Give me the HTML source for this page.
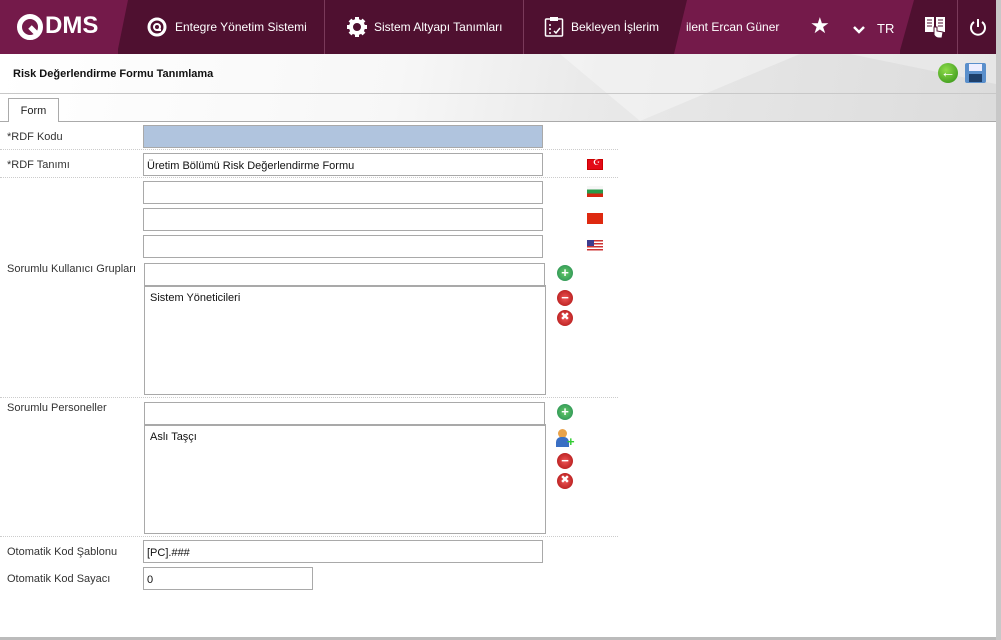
<!DOCTYPE html>
<html><head><meta charset="utf-8"><style>
*{box-sizing:border-box;margin:0;padding:0}
body{width:1001px;height:640px;overflow:hidden;background:#fff;font-family:"Liberation Sans","DejaVu Sans",sans-serif;position:relative}
.hdr{position:absolute;left:0;top:0;width:996px;height:54px;background:#4f1030;overflow:hidden}
.abs{position:absolute}
.ht{position:absolute;color:#fff;font-size:12px;top:20px;white-space:nowrap}
.sep{position:absolute;top:0;width:1px;height:54px;background:#7a3a5a}
.lbl{position:absolute;left:7px;font-size:11px;color:#333}
.in{position:absolute;border:1px solid #a9a9a9;background:#fff;height:23px;font-size:11px;color:#111;padding:6px 0 0 3px;white-space:nowrap}
.ta{position:absolute;border:1px solid #a9a9a9;border-top:2px solid #a9a9a9;background:#fff;font-size:11px;color:#111;padding:5px 0 0 5px}
.dot{position:absolute;left:0;width:618px;border-top:1px dotted #ccc}
.flag{position:absolute;left:587px;width:16px;height:11px}
.circ{position:absolute;left:557px;width:16px;height:16px;border-radius:50%;color:#fff;font-weight:bold;font-size:13px;line-height:15px;text-align:center}
</style></head><body>
<div class="hdr">
 <div class="abs" style="top:0;width:0;height:0;border-top:54px solid #741a4a;border-right:11px solid transparent;left:117px"></div>
 <div class="abs" style="left:0;top:0;width:118px;height:54px;background:#741a4a"></div>
 <svg class="abs" style="left:16px;top:13px" width="30" height="30" viewBox="0 0 30 30"><circle cx="14" cy="14" r="10.5" fill="none" stroke="#fff" stroke-width="5"/><path d="M14 14 L22 22" stroke="#fff" stroke-width="5"/></svg>
 <div class="abs" style="left:45px;top:12px;color:#fff;font-size:24px;font-weight:bold">DMS</div>
 <svg class="abs" style="left:147px;top:17px" width="20" height="20" viewBox="0 0 20 20"><circle cx="10" cy="10" r="8" fill="none" stroke="#fff" stroke-width="3"/><circle cx="10" cy="10" r="3" fill="none" stroke="#fff" stroke-width="2"/><path d="M10 13 L14 13" stroke="#fff" stroke-width="2"/></svg>
 <div class="ht" style="left:175px">Entegre Yönetim Sistemi</div>
 <div class="sep" style="left:324px"></div>
 <svg class="abs" style="left:346px;top:16px" width="22" height="22" viewBox="0 0 22 22"><circle cx="11" cy="11" r="6" fill="none" stroke="#fff" stroke-width="4"/><g stroke="#fff" stroke-width="4"><path d="M11 1v4M11 17v4M1 11h4M17 11h4M4 4l3 3M15 15l3 3M18 4l-3 3M4 18l3-3"/></g></svg>
 <div class="ht" style="left:374px">Sistem Altyapı Tanımları</div>
 <div class="sep" style="left:523px"></div>
 <svg class="abs" style="left:544px;top:16px" width="20" height="22" viewBox="0 0 20 22"><rect x="1.5" y="3" width="17" height="17" rx="1" fill="none" stroke="#fff" stroke-width="1.5"/><rect x="6" y="1" width="8" height="4" fill="#fff"/><path d="M5 9h2M5 13h2M5 17h2M10 15l2 2 4-5" stroke="#fff" stroke-width="1.5" fill="none"/></svg>
 <div class="ht" style="left:571px">Bekleyen İşlerim</div>
 <div class="abs" style="left:674px;top:0;width:0;height:0;border-bottom:54px solid #741a4a;border-left:13px solid transparent"></div>
 <div class="abs" style="left:687px;top:0;width:213px;height:54px;background:#741a4a"></div>
 <div class="abs" style="left:899px;top:0;width:0;height:0;border-top:54px solid #741a4a;border-right:15px solid transparent"></div>
 <div class="ht" style="left:686px">ilent Ercan Güner</div>
 <div class="ht" style="left:810px;top:13px;font-size:22px">★</div>
 <svg class="abs" style="left:853px;top:26px" width="12" height="8" viewBox="0 0 12 8"><path d="M1 1l5 5 5-5" stroke="#fff" stroke-width="2.5" fill="none"/></svg>
 <div class="ht" style="left:877px;top:21px;font-size:13px">TR</div>
 <svg class="abs" style="left:923px;top:15px" width="24" height="24" viewBox="0 0 24 24"><path d="M2 2h9v15H2zM13 2h9v15h-9z" fill="#fff"/><path d="M4 5h5M4 8h5M4 11h5M15 5h5M15 8h5M15 11h5" stroke="#4f1030" stroke-width="1"/><path d="M11 12v8q2 3 5 3h3l1-6-6-1v-4z" fill="#fff" stroke="#4f1030" stroke-width="1"/></svg>
 <div class="sep" style="left:957px"></div>
 <svg class="abs" style="left:969px;top:18px" width="18" height="18" viewBox="0 0 18 18"><path d="M5 4a7 7 0 1 0 8 0" stroke="#fff" stroke-width="2" fill="none"/><path d="M9 1v8" stroke="#fff" stroke-width="2"/></svg>
</div>
<div class="abs" style="left:0;top:54px;width:996px;height:67px;background:linear-gradient(100deg,#fff 0%,#f7f7f7 40%,#e9e9e9 60%,#dcdcdc 100%)"></div>
<svg class="abs" style="left:0;top:54px" width="996" height="67"><polygon points="560,0 800,0 640,67" fill="#fff" opacity=".35"/><polygon points="850,0 996,30 996,0" fill="#fff" opacity=".3"/></svg>
<div class="abs" style="left:0;top:93px;width:996px;height:1px;background:#c8c8c8"></div>
<div class="abs" style="left:13px;top:68px;font-size:11px;font-weight:bold;color:#111">Risk Değerlendirme Formu Tanımlama</div>
<div class="abs" style="left:938px;top:63px;width:20px;height:20px;border-radius:50%;background:radial-gradient(circle at 40% 35%,#8fdc4a,#2f8f15);color:#fff;font-size:15px;font-weight:bold;line-height:19px;text-align:center">←</div>
<div class="abs" style="left:965px;top:63px;width:21px;height:20px;background:#5a8fcb;border-radius:2px"><div class="abs" style="left:4px;top:1px;width:13px;height:7px;background:#eef"></div><div class="abs" style="left:4px;top:11px;width:13px;height:8px;background:#1e3f6a"></div></div>
<div class="abs" style="left:0;top:121px;width:996px;height:1px;background:#aaa"></div>
<div class="abs" style="left:8px;top:98px;width:51px;height:24px;background:#fff;border:1px solid #aaa;border-bottom:none;font-size:11px;color:#222;text-align:center;padding-top:6px">Form</div>
<div class="abs" style="left:996px;top:0;width:5px;height:640px;background:#c8c8c8"></div>
<div class="abs" style="left:0;top:637px;width:996px;height:3px;background:#bbb"></div>

<div class="lbl" style="top:131px">*RDF Kodu</div>
<div class="in" style="left:143px;top:125px;width:400px;background:#b0c4de"></div>
<div class="dot" style="top:149px"></div>
<div class="lbl" style="top:159px">*RDF Tanımı</div>
<div class="in" style="left:143px;top:153px;width:400px">Üretim Bölümü Risk Değerlendirme Formu</div>
<div class="flag" style="top:159px;background:#e30a17;border:1px solid #c00"><span style="position:absolute;left:5px;top:-2px;color:#fff;font-size:8px">☪</span></div>
<div class="dot" style="top:177px"></div>
<div class="in" style="left:143px;top:181px;width:400px"></div>
<div class="flag" style="top:186px;background:linear-gradient(#f6f6f6 33%,#2a9a4a 33%,#2a9a4a 66%,#d62612 66%)"></div>
<div class="in" style="left:143px;top:208px;width:400px"></div>
<div class="flag" style="top:213px;background:#de2910"></div>
<div class="in" style="left:143px;top:235px;width:400px"></div>
<div class="flag" style="top:240px;background:repeating-linear-gradient(#c33 0 1.5px,#fff 1.5px 3px)"><div class="abs" style="left:0;top:0;width:7px;height:6px;background:#3c3b8e"></div></div>

<div class="lbl" style="top:263px">Sorumlu Kullanıcı Grupları</div>
<div class="in" style="left:144px;top:263px;width:401px"></div>
<div class="ta" style="left:144px;top:285px;width:402px;height:110px">Sistem Yöneticileri</div>
<div class="circ" style="top:265px;background:radial-gradient(#6c6,#285)">+</div>
<div class="circ" style="top:290px;background:radial-gradient(#e55,#a11)">−</div>
<div class="circ" style="top:310px;background:radial-gradient(#e55,#a11);font-size:11px">✖</div>
<div class="dot" style="top:397px"></div>

<div class="lbl" style="top:402px">Sorumlu Personeller</div>
<div class="in" style="left:144px;top:402px;width:401px"></div>
<div class="ta" style="left:144px;top:424px;width:402px;height:110px">Aslı Taşçı</div>
<div class="circ" style="top:404px;background:radial-gradient(#6c6,#285)">+</div>
<div class="abs" style="left:558px;top:429px;width:9px;height:9px;border-radius:50%;background:#e9a24a"></div>
<div class="abs" style="left:556px;top:437px;width:13px;height:10px;border-radius:5px 5px 0 0;background:#3a6fc4"></div>
<div class="abs" style="left:567px;top:436px;color:#3c3;font-weight:bold;font-size:13px;line-height:11px">+</div>
<div class="circ" style="top:453px;background:radial-gradient(#e55,#a11)">−</div>
<div class="circ" style="top:473px;background:radial-gradient(#e55,#a11);font-size:11px">✖</div>
<div class="dot" style="top:536px"></div>

<div class="lbl" style="top:546px">Otomatik Kod Şablonu</div>
<div class="in" style="left:143px;top:540px;width:400px">[PC].###</div>
<div class="lbl" style="top:573px">Otomatik Kod Sayacı</div>
<div class="in" style="left:143px;top:567px;width:170px">0</div>
</body></html>
